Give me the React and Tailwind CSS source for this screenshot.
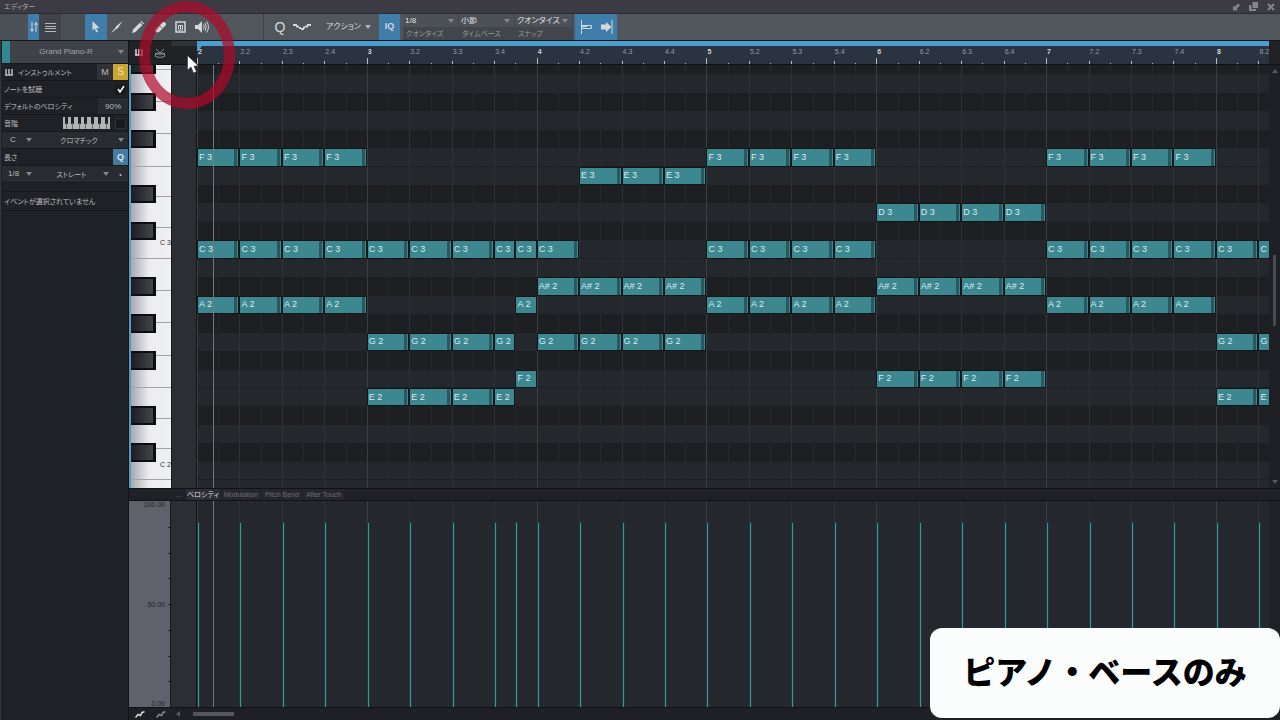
import React from "react";
import clsx from "clsx";

const TOTAL_BEATS = 25.25;
const TOTAL_ROWS = 22.92;
const TOP_PITCH = 57.5;
const NAMES = ["C", "C#", "D", "D#", "E", "F", "F#", "G", "G#", "A", "A#", "B"];
const BLACK = [1, 3, 6, 8, 10];

const beatPct = (beats) => `${(beats / TOTAL_BEATS) * 100}%`;
const rowPct = (rows) => `${(rows / TOTAL_ROWS) * 100}%`;
const rowTop = (pitch) => TOP_PITCH - pitch;
const pitchName = (pitch) => `${NAMES[pitch % 12]} ${Math.floor(pitch / 12) - 1}`;

const range = (from, to) => Array.from({ length: to - from + 1 }, (_, i) => from + i);
const fullBeats = (from, to) => range(from, to).map((b) => [b, 1]);

// pitch -> list of [start beat, length]
const PARTS = [
	[53, [...fullBeats(0, 3), ...fullBeats(12, 15), ...fullBeats(20, 23)]],
	[52, fullBeats(9, 11)],
	[50, fullBeats(16, 19)],
	[48, [...fullBeats(0, 6), [7, 0.5], [7.5, 0.5], [8, 1], ...fullBeats(12, 15), ...fullBeats(20, 25)]],
	[46, [...fullBeats(8, 11), ...fullBeats(16, 19)]],
	[45, [...fullBeats(0, 3), [7.5, 0.5], ...fullBeats(12, 15), ...fullBeats(20, 23)]],
	[43, [...fullBeats(4, 6), [7, 0.5], ...fullBeats(8, 11), ...fullBeats(24, 25)]],
	[41, [[7.5, 0.5], ...fullBeats(16, 19)]],
	[40, [...fullBeats(4, 6), [7, 0.5], ...fullBeats(24, 25)]],
];

const PITCHES = range(35, 58).reverse();
const HALF_BEATS = range(0, 50).map((n) => n / 2);
const VELOCITY_BEATS = [...range(0, 7), 7.5, ...range(8, 25)];

const WHITE_KEYS = [24, 36, 48].flatMap((base) =>
	range(0, 6).map((i) => {
		const height = i < 3 ? 5 / 3 : 7 / 4;
		const bottom = rowTop(base) + 1 - (i < 3 ? i * height : 5 + (i - 3) * height);
		return { id: `${base}-${i}`, top: bottom - height, height, label: i === 0 ? pitchName(base) : "" };
	})
).filter((key) => key.top < TOTAL_ROWS);

const Triangle = ({ className }) => (
	<svg viewBox="0 0 6 4" className={clsx("w-[6px] h-1 fill-current", className)} aria-hidden="true">
		<path d="M0 0h6L3 4z" />
	</svg>
);

const Dropdown = ({ label, value, className, center }) => (
	<span className={clsx("relative flex items-center", className)}>
		<select
			aria-label={label}
			className={clsx(
				"appearance-none w-full h-full bg-transparent pl-[2px] leading-none outline-none",
				center ? "pr-2 [text-align-last:center]" : "pr-3"
			)}
		>
			<option>{value}</option>
		</select>
		<Triangle className="absolute right-1 text-[#85878b] pointer-events-none" />
	</span>
);

const ToolButton = ({ label, active, className, children }) => (
	<button
		type="button"
		aria-label={label}
		className={clsx("h-full flex items-center justify-center text-[#d4d6d8]", active && "bg-[#3f7eaa]", className)}
	>
		{children}
	</button>
);

const TitleBar = () => (
	<header className="h-[14px] shrink-0 bg-[#3c3a43] border-b border-[#2b2b31] flex items-center justify-between pl-1 pr-[5px] text-[#a3a2a9]">
		<h1 className="text-[7px] leading-none">エディター</h1>
		<div className="flex items-center gap-[9px] text-[#85848b]">
			<button type="button" aria-label="固定">
				<svg viewBox="0 0 8 8" className="w-2 h-2 fill-current">
					<path d="M1 2.5V7.5H6L4.6 6 8 2.5 6 .5 2.7 4z" />
				</svg>
			</button>
			<button type="button" aria-label="切り離す">
				<svg viewBox="0 0 9 9" className="w-[9px] h-[9px] fill-current">
					<path d="M3.5 0H9v6H3.5z" />
					<path d="M0 3h2.5v4H7v2H0z" />
				</svg>
			</button>
			<button type="button" aria-label="閉じる">
				<svg viewBox="0 0 8 8" className="w-2 h-2 stroke-current stroke-2">
					<path d="M1 1l6 6M7 1L1 7" />
				</svg>
			</button>
		</div>
	</header>
);

const QUANTIZE = [
	["1/8", "クオンタイズ", "w-14"],
	["小節", "タイムベース", "w-14"],
	["クオンタイズ", "スナップ", "w-[58px]"],
];

const Toolbar = () => (
	<div className="h-[26px] shrink-0 bg-[#51565c] flex items-stretch" role="toolbar">
		<div className="w-7 bg-[#4c5157]" />
		<ToolButton label="トラック" active className="w-[11px]">
			<svg viewBox="0 0 8 12" className="w-2 h-3 fill-none stroke-current">
				<path d="M2 1v9M.5 8L2 10.5 3.5 8M6 11V2M4.500 4L6 1.500 7.500 4" />
			</svg>
		</ToolButton>
		<ToolButton label="リスト" className="w-[22px] bg-[#40444a]">
			<svg viewBox="0 0 11 9" className="w-[11px] h-[9px] stroke-[#b4b6b9]">
				<path d="M0 .5h11M0 3.500h11M0 5.500h11M0 8.500h11" />
			</svg>
		</ToolButton>
		<div className="w-6 bg-[#4a4f55]" />
		<ToolButton label="矢印ツール" active className="w-[22px]">
			<svg viewBox="0 0 8 12" className="w-2 h-3 fill-current">
				<path d="M.5 0v9.500L2.700 7.500 4.300 11.500 6 10.800 4.300 7H7.500z" />
			</svg>
		</ToolButton>
		<ToolButton label="ペイント" className="w-5">
			<svg viewBox="0 0 12 12" className="w-3 h-3 fill-current">
				<path d="M11.500 0L5 5.500 3.500 8 5 8.500 7 7z" />
				<path d="M3.200 8L0 12l4.500-3z" />
			</svg>
		</ToolButton>
		<ToolButton label="鉛筆" className="w-[22px]">
			<svg viewBox="0 0 12 12" className="w-3 h-3 fill-current">
				<path d="M0 12l1-3.500L8 1.500 10.500 4l-7 7z" />
				<path d="M8.700.8L9.500 0 12 2.500l-.8.800z" />
			</svg>
		</ToolButton>
		<ToolButton label="消しゴム" className="w-[21px]">
			<svg viewBox="0 0 12 12" className="w-3 h-3">
				<path d="M1 8L8 1q2-1 3.500 1T11 5L5 11Q3 12 1.500 10.500T1 8z" className="fill-current" />
				<path d="M5 4l3.500 3.500" className="stroke-[#70757b] fill-none" />
			</svg>
		</ToolButton>
		<ToolButton label="ミュート" className="w-[21px]">
			<svg viewBox="0 0 11 12" className="w-[11px] h-3 fill-none stroke-current">
				<path d="M1 1h9v10H1z" className="stroke-[1.500]" />
				<path d="M3.500 8V4.500h4V8M5.500 4.500V8M3 9h5" />
			</svg>
		</ToolButton>
		<ToolButton label="試聴" className="w-[22px]">
			<svg viewBox="0 0 14 12" className="w-[14px] h-3">
				<path d="M0 4h3l4-4v12L3 8H0z" className="fill-current" />
				<path d="M8.500 3.500q1.500 2.500 0 5M10 2q2.500 4 0 8M11.700.5q3.500 5.500 0 11" className="fill-none stroke-current" />
			</svg>
		</ToolButton>
		<div className="w-[51px] border-r border-[#3f4349]" />
		<ToolButton label="クオンタイズを適用" className="w-8 text-sm leading-none">
			Q
		</ToolButton>
		<ToolButton label="ヒューマナイズ" className="w-3">
			<svg viewBox="0 0 18 6" className="w-[18px] h-[6px] shrink-0 fill-current">
				<path d="M0 0h4v2H0zM3 1.500h3v2H3zM6 3h2v2H6zM8 4h3v2H8zM10 2.500h2v2h-2zM12 1.500h3v2h-3zM14 0h4v2h-4z" />
			</svg>
		</ToolButton>
		<ToolButton label="アクション" className="w-[71px] gap-1 pl-[10px] text-[8px]">
			アクション
			<Triangle className="text-[#b0b2b5]" />
		</ToolButton>
		<ToolButton label="入力クオンタイズ" active className="w-[21px] text-[9px] font-bold">
			IQ
		</ToolButton>
		<div className="ml-[3px] flex bg-[#42464c] text-[7px]">
			{QUANTIZE.map(([value, label, width]) => (
				<div key={label} className={clsx("flex flex-col border-r border-[#42464c]", width)}>
					<Dropdown label={label} value={value} className="h-[13px] bg-[#4c5157] text-[#e2e3e4] text-[8px]" />
					<span className="h-[13px] pl-[3px] leading-[13px] text-[#94979b]">{label}</span>
				</div>
			))}
		</div>
		<ToolButton label="エンドを固定" active className="ml-[2px] w-[21px]">
			<svg viewBox="0 0 12 14" className="w-3 h-[14px] fill-none stroke-current">
				<path d="M1.500 0v14" />
				<path d="M2 5.500h9.500v3H2zM2 6.500h5" />
			</svg>
		</ToolButton>
		<ToolButton label="自動スクロール" active className="w-[21px]">
			<svg viewBox="0 0 12 14" className="w-3 h-[14px] fill-current">
				<path d="M0 4.500h5V2l5.500 5L5 12V9.500H0z" />
				<path d="M10.500 0h1v14h-1z" />
			</svg>
		</ToolButton>
	</div>
);

const KeysIcon = ({ className }) => (
	<svg viewBox="0 0 8 7" className={clsx("w-2 h-[7px] fill-none stroke-current", className)}>
		<path d="M1 0v6M4 0v6M7 0v6M0 6h8" className="stroke-[1.500]" />
	</svg>
);

const PanelRow = ({ className, children }) => (
	<div className={clsx("h-[17px] flex items-stretch border-b border-[#18191d]", className)}>{children}</div>
);

const Inspector = () => (
	<aside className="w-[129px] shrink-0 bg-[#202126] border-l border-[#35363c] border-r border-r-[#131418] pl-px text-[7px] leading-none text-[#b9babd]">
		<div className="h-[23px] flex items-stretch bg-[#3f4249] border-b border-[#18191d]">
			<span className="w-2 bg-[#2f8a90]" />
			<Dropdown label="トラック" value="Grand Piano-R" center className="flex-1 text-[8px] text-[#a1a3a7]" />
		</div>
		<PanelRow>
			<span className="flex-1 flex items-center pl-[3px] gap-[5px]">
				<KeysIcon />
				インストゥルメント
			</span>
			<button type="button" className="w-4 bg-[#303238] text-[9px]">M</button>
			<button type="button" className="w-[15px] bg-[#caa52f] text-[10px] text-[#f1e6b8]">S</button>
		</PanelRow>
		<PanelRow>
			<label htmlFor="audition" className="flex-1 flex items-center pl-[2px]">ノートを試聴</label>
			<span className="relative w-[15px] flex items-center justify-center">
				<input id="audition" type="checkbox" defaultChecked className="peer appearance-none w-[11px] h-[11px] bg-[#191a1e]" />
				<svg viewBox="0 0 8 8" className="absolute w-2 h-2 fill-none stroke-white stroke-[1.500] opacity-0 peer-checked:opacity-100 pointer-events-none">
					<path d="M1 4l2 3 4-6" />
				</svg>
			</span>
		</PanelRow>
		<PanelRow>
			<label htmlFor="velocity" className="flex-1 flex items-center pl-[2px]">デフォルトのベロシティ</label>
			<input id="velocity" defaultValue="90%" className="w-[30px] bg-[#292b30] text-center text-[8px] outline-none" />
		</PanelRow>
		<PanelRow>
			<label htmlFor="scale" className="flex-1 flex items-center pl-[2px]">音階</label>
			<svg viewBox="0 0 47 12" className="w-[47px] h-3 self-center mr-[3px]">
				<path d="M0 0h47v12H0z" fill="#b3b4b6" />
				<path d="M2 0h3v7H2zM8 0h3v7H8zM15 0h3v7h-3zM21 0h3v7h-3zM28 0h3v7h-3zM35 0h3v7h-3zM42 0h3v7h-3z" fill="#202126" />
				<path d="M3.500 6v6M9.500 6v6M16.500 6v6M22.500 6v6M29.500 6v6M36.500 6v6M43.500 6v6" stroke="#66686d" />
			</svg>
			<span className="w-[15px] flex items-center justify-center">
				<input id="scale" type="checkbox" className="appearance-none w-[11px] h-[11px] bg-[#191a1e] border border-[#303238] checked:bg-[#3f7eaa]" />
			</span>
		</PanelRow>
		<PanelRow className="bg-[#292b30]">
			<Dropdown label="ルート音" value="C" className="w-[34px] pl-[6px] text-[8px]" />
			<Dropdown label="スケール" value="クロマチック" center className="flex-1" />
		</PanelRow>
		<PanelRow>
			<span className="flex-1 flex items-center pl-[2px]">長さ</span>
			<button type="button" className="w-[15px] bg-[#467ba0] text-[9px] font-bold text-[#dce6ee]">Q</button>
		</PanelRow>
		<PanelRow className="bg-[#292b30]">
			<Dropdown label="長さ" value="1/8" className="w-[34px] pl-1 text-[8px]" />
			<Dropdown label="拍" value="ストレート" center className="flex-1" />
			<button type="button" className="w-[15px]">•</button>
		</PanelRow>
		<div className="h-[9px] border-b border-[#18191d]" />
		<p className="h-[19px] pl-[2px] flex items-center border-b border-[#18191d]">イベントが選択されていません</p>
	</aside>
);

const Ruler = () => (
	<div className="h-6 shrink-0 flex border-b border-[#111216] bg-[#202226]">
		<div className="w-[42px] flex items-center">
			<button type="button" aria-label="ピアノ表示" className="w-5 flex justify-center text-[#d7d8da]">
				<KeysIcon />
			</button>
			<button type="button" aria-label="ドラム表示" className="w-[22px] flex justify-center text-[#8d8f93]">
				<svg viewBox="0 0 10 10" className="w-[10px] h-[10px] fill-none stroke-current">
					<path d="M1 1l4 4M9 1L5 5" />
					<path d="M.5 5.500q4.500-1 9 0v3q-4.500 2-9 0zM.5 5.500q4.500 2 9 0" />
				</svg>
			</button>
		</div>
		<div className="w-[26px]">
			<div className="h-[5px] bg-[#303338]" />
		</div>
		<div className="relative flex-1 bg-[#293440] overflow-hidden">
			<div className="h-[5px] bg-[#4c9fcd]" />
			<svg viewBox="0 0 5 6" className="absolute top-1 left-0 w-[5px] h-[6px] fill-[#4c9fcd]">
				<path d="M0 0h5v1L1 6H0z" />
			</svg>
			{HALF_BEATS.map((beat) => {
				const isBar = beat % 4 === 0;
				const isBeat = beat % 1 === 0;
				const bar = 2 + Math.floor(beat / 4);
				return (
					<div key={beat} className="absolute inset-y-0" style={{ left: beatPct(beat) }}>
						<span
							className={clsx(
								"absolute bottom-0 w-px bg-[#b5babf]",
								isBar ? "h-[6px]" : isBeat ? "h-[3px]" : "h-px"
							)}
						/>
						{isBeat && (
							<span
								className={clsx(
									"absolute top-[7px] left-px text-[7px] leading-none",
									isBar ? "font-bold text-[#cfd3d7]" : "text-[#949ca5]"
								)}
							>
								{isBar ? bar : `${bar}.${(beat % 4) + 1}`}
							</span>
						)}
					</div>
				);
			})}
		</div>
		<div className="w-[11px]" />
	</div>
);

const Keyboard = () => (
	<div className="relative w-[42px] shrink-0 overflow-hidden border-l-2 border-[#4c9fcd] bg-linear-to-r from-[#a8a9ae] via-[#ececf1] via-45% to-[#efeff4]">
		{WHITE_KEYS.map((key) => (
			<div
				key={key.id}
				className="absolute inset-x-0 flex items-center border-b border-[#a2a2a7]"
				style={{ top: rowPct(key.top), height: rowPct(key.height) }}
			>
				{key.label && (
					<span className="pl-[29px] whitespace-nowrap text-[7px] leading-none text-[#333438]">{key.label}</span>
				)}
			</div>
		))}
		{PITCHES.filter((p) => BLACK.includes(p % 12)).map((p) => (
			<div
				key={p}
				className="absolute left-0 w-[25px] border-y-2 border-r-3 border-[#0d0e11] bg-linear-to-r from-[#1d1e22] to-[#44454a]"
				style={{ top: rowPct(rowTop(p)), height: rowPct(1) }}
			/>
		))}
	</div>
);

const GridLines = ({ halves }) =>
	HALF_BEATS.filter((b) => halves || b % 1 === 0).map((beat) => (
		<span
			key={beat}
			className={clsx(
				"absolute inset-y-0 w-px",
				beat % 4 === 0 ? "bg-[#3b3d41]" : beat % 1 === 0 ? "bg-[#2e3135]" : "bg-[#25282c]"
			)}
			style={{ left: beatPct(beat) }}
		/>
	));

const NoteGrid = () => (
	<div className="relative flex-1 overflow-hidden bg-[#24272b]">
		{PITCHES.map((p) => (
			<div
				key={p}
				className={clsx(
					"absolute inset-x-0",
					BLACK.includes(p % 12) && "bg-[#1e1f23]",
					(p % 12 === 0 || p % 12 === 5) && "border-b border-[#1c1e22]"
				)}
				style={{ top: rowPct(rowTop(p)), height: rowPct(1) }}
			/>
		))}
		<GridLines halves />
		{PARTS.map(([pitch, notes]) =>
			notes.map(([start, length]) => (
				<div
					key={`${pitch}-${start}`}
					className="absolute overflow-hidden border border-[#14171a] bg-[#3c8790] flex items-center"
					style={{
						left: beatPct(start),
						width: beatPct(length),
						top: rowPct(rowTop(pitch)),
						height: rowPct(1),
					}}
				>
					<span className="flex-1 pl-px whitespace-nowrap text-[9px] leading-none text-[#d8ecee]">{pitchName(pitch)}</span>
					{length === 1 && <span className="w-[3px] mr-px h-full shrink-0 bg-[#265960]" />}
				</div>
			))
		)}
		<span className="absolute inset-y-0 left-4 w-px bg-[#73767a]" />
	</div>
);

const ControllerTabs = () => (
	<div className="h-[13px] shrink-0 flex items-stretch gap-px border-y border-[#111216] bg-[#202126] pl-[44px] text-[7px] leading-none text-[#6c6e73]">
		<button type="button" className="w-3">...</button>
		<button type="button" className="px-px whitespace-nowrap bg-[#2d2e33] text-[#dcdde0]">ベロシティ</button>
		{["Modulation", "Pitch Bend", "After Touch"].map((name) => (
			<button key={name} type="button" className="px-[3px] whitespace-nowrap bg-[#26272c]">
				{name}
			</button>
		))}
	</div>
);

const VelocityLane = () => (
	<div className="h-[206px] shrink-0 flex">
		<div className="relative w-[42px] bg-[#5f616b] border-r border-[#15161a] flex flex-col justify-between pr-[5px] text-right text-[7px] leading-none text-[#25262b]">
			<span>100.00</span>
			<span>50.00</span>
			<span>0.00</span>
			{range(1, 7).map((n) => (
				<i key={n} className="absolute right-0 w-[2px] h-px bg-[#25262b]" style={{ top: `${n * 12.5}%` }} />
			))}
		</div>
		<div className="w-[26px] bg-[#2b2e33] border-r border-[#111216]" />
		<div className="relative flex-1 overflow-hidden bg-[#24272b]">
			<GridLines />
			{VELOCITY_BEATS.map((beat) => (
				<span
					key={beat}
					className="absolute bottom-0 h-[90%] w-[3px] border-x border-t border-x-[#1b3a3e] border-t-[#1b3a3e] bg-[#468f92]"
					style={{ left: beatPct(beat) }}
				/>
			))}
			<span className="absolute inset-y-0 left-4 w-px bg-[#73767a]" />
		</div>
		<div className="w-[11px] bg-[#202126]" />
	</div>
);

const FooterBar = () => (
	<div className="h-[13px] shrink-0 flex items-center bg-[#1f2025] border-t border-[#111216]">
		{["text-[#d7d8da]", "text-[#85878b]"].map((color, i) => (
			<button key={color} type="button" aria-label={`エンベロープ ${i + 1}`} className={clsx("w-[21px] flex justify-center", color)}>
				<svg viewBox="0 0 10 7" className="w-[10px] h-[7px] fill-none stroke-current">
					<path d="M.5 6.500L3 3.500 5.500 4.500 7 1.500 9.500.8" className="stroke-[1.500]" />
				</svg>
			</button>
		))}
		<Triangle className="rotate-90 ml-1 text-[#56585d]" />
		<span className="ml-3 w-[41px] h-1 bg-[#55565c]" />
	</div>
);

const App = () => (
	<div
		lang="ja"
		className="relative h-screen flex flex-col overflow-hidden bg-[#15161a] font-['Liberation_Sans','Noto_Sans_CJK_JP',sans-serif] [font-feature-settings:'palt']"
	>
		<TitleBar />
		<Toolbar />
		<div className="flex-1 min-h-0 flex pt-px">
			<Inspector />
			<main className="flex-1 min-w-0 flex flex-col">
				<Ruler />
				<div className="flex-1 min-h-0 flex">
					<Keyboard />
					<div className="w-[26px] bg-[#2b2e33] border-x border-[#15161a]" />
					<NoteGrid />
					<div className="w-[11px] bg-[#1f2025] flex flex-col items-center justify-between py-1 text-[#56585d]">
						<Triangle className="rotate-180" />
						<span className="w-[3px] h-[17%] mt-7 bg-[#494a51]" />
						<Triangle />
					</div>
				</div>
				<ControllerTabs />
				<VelocityLane />
				<FooterBar />
			</main>
		</div>

		<div className="absolute top-px left-[139px] w-24 h-[108px] rounded-[50%] border-11 border-[#b0082a]/70 pointer-events-none" />
		<svg viewBox="0 0 12 19" className="absolute top-[55px] left-[187px] w-3 h-[19px] pointer-events-none">
			<path d="M.5.500v14.500L4 12l2.500 6 3-1.300L7 11h4.500z" fill="#fff" stroke="#2b2b2b" strokeWidth=".6" />
		</svg>
		<div className="absolute bottom-[2px] right-0 w-[350px] h-[90px] rounded-xl bg-[#fbfcfc] flex items-center justify-center">
			<p className="text-[32px] leading-none font-black text-black [font-feature-settings:normal]">ピアノ・ベースのみ</p>
		</div>
	</div>
);

export default App;
